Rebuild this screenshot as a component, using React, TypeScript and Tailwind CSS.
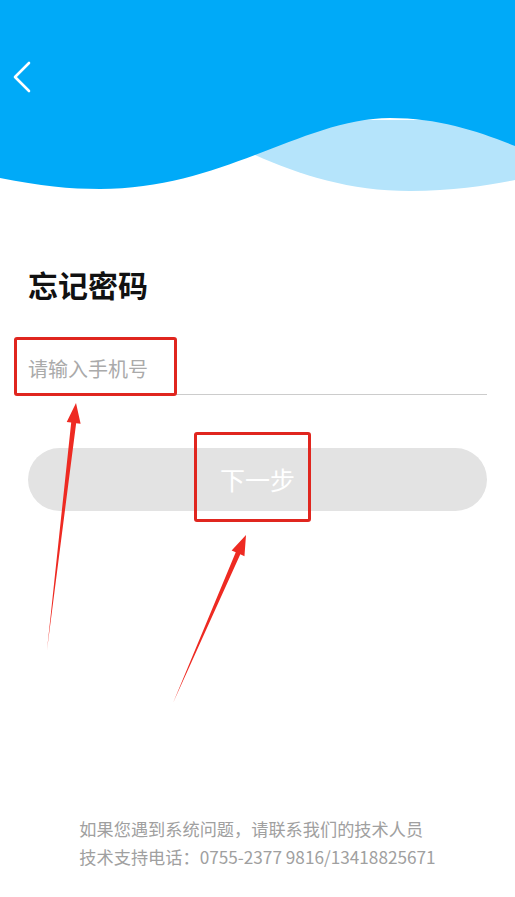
import React from 'react';

function Header() {
  return (
    <div className="relative h-[195px] w-full shrink-0">
      {/* wave background */}
      <svg className="absolute inset-0 h-full w-full" viewBox="0 0 515 195" preserveAspectRatio="none">
        <path d="M255,155 C300,175 350,191 410,191 C455,191 490,185 515,180 L515,120 L255,120 Z" fill="#B5E4FB" />
        <path
          d="M0,178 C40,186 70,189 100,189 C160,189 210,172 255,155 C300,138 345,118 390,118 C440,118 480,132 515,146 L515,0 L0,0 Z"
          fill="#00AAF8"
        />
      </svg>
      <button className="relative ml-[10px] mt-[58px] flex h-[36px] w-[24px] items-center justify-center">
        <svg width="22" height="34" viewBox="0 0 22 34" fill="none">
          <path d="M18,4 L4,18 L18,32" stroke="white" strokeWidth="2.6" strokeLinecap="round" strokeLinejoin="round" />
        </svg>
      </button>
    </div>
  );
}

function Annotations() {
  return (
    <>
      <div className="pointer-events-none absolute left-[14px] top-[337px] h-[59px] w-[163px] rounded-[3px] border-[3px] border-[#E0261F]" />
      <div className="pointer-events-none absolute left-[194px] top-[432px] h-[90px] w-[117px] rounded-[3px] border-[3px] border-[#E0261F]" />
      <svg className="pointer-events-none absolute inset-0 h-full w-full" viewBox="0 0 515 897">
        <polygon
          points="47,650 71.19,422.57 66.72,422.04 76,403 80.62,423.68 76.15,423.15"
          fill="#EE2A22"
        />
        <polygon
          points="173,703 235.74,552.34 231.61,550.55 246,535 244.45,556.13 240.32,554.34"
          fill="#EE2A22"
        />
      </svg>
    </>
  );
}

export default function App() {
  return (
    <div
      className="relative flex h-[897px] w-full flex-col overflow-hidden bg-white"
      style={{ fontFamily: '"Noto Sans CJK SC", "Noto Sans", sans-serif' }}
    >
      <Header />

      <main className="flex flex-1 flex-col px-[28px]">
        <h1 className="mt-[69px] text-[30px] font-bold leading-[40px] text-[#111]">忘记密码</h1>

        <input
          type="tel"
          placeholder="请输入手机号"
          className="mt-[39px] h-[52px] w-full border-b border-[#cccccc] bg-transparent text-[20px] text-[#333] outline-none placeholder:text-[#aaaaaa]"
        />

        <button className="mt-[53px] h-[63px] w-full rounded-full bg-[#e3e3e3] text-[25px] text-white">
          下一步
        </button>

        <div className="flex-1" />

        <footer className="mx-auto w-fit pb-[26px] text-left text-[17.2px] leading-[28px] text-[#a0a0a0]">
          <p>如果您遇到系统问题，请联系我们的技术人员</p>
          <p>技术支持电话：0755-2377 9816/13418825671</p>
        </footer>
      </main>

      <Annotations />
    </div>
  );
}
